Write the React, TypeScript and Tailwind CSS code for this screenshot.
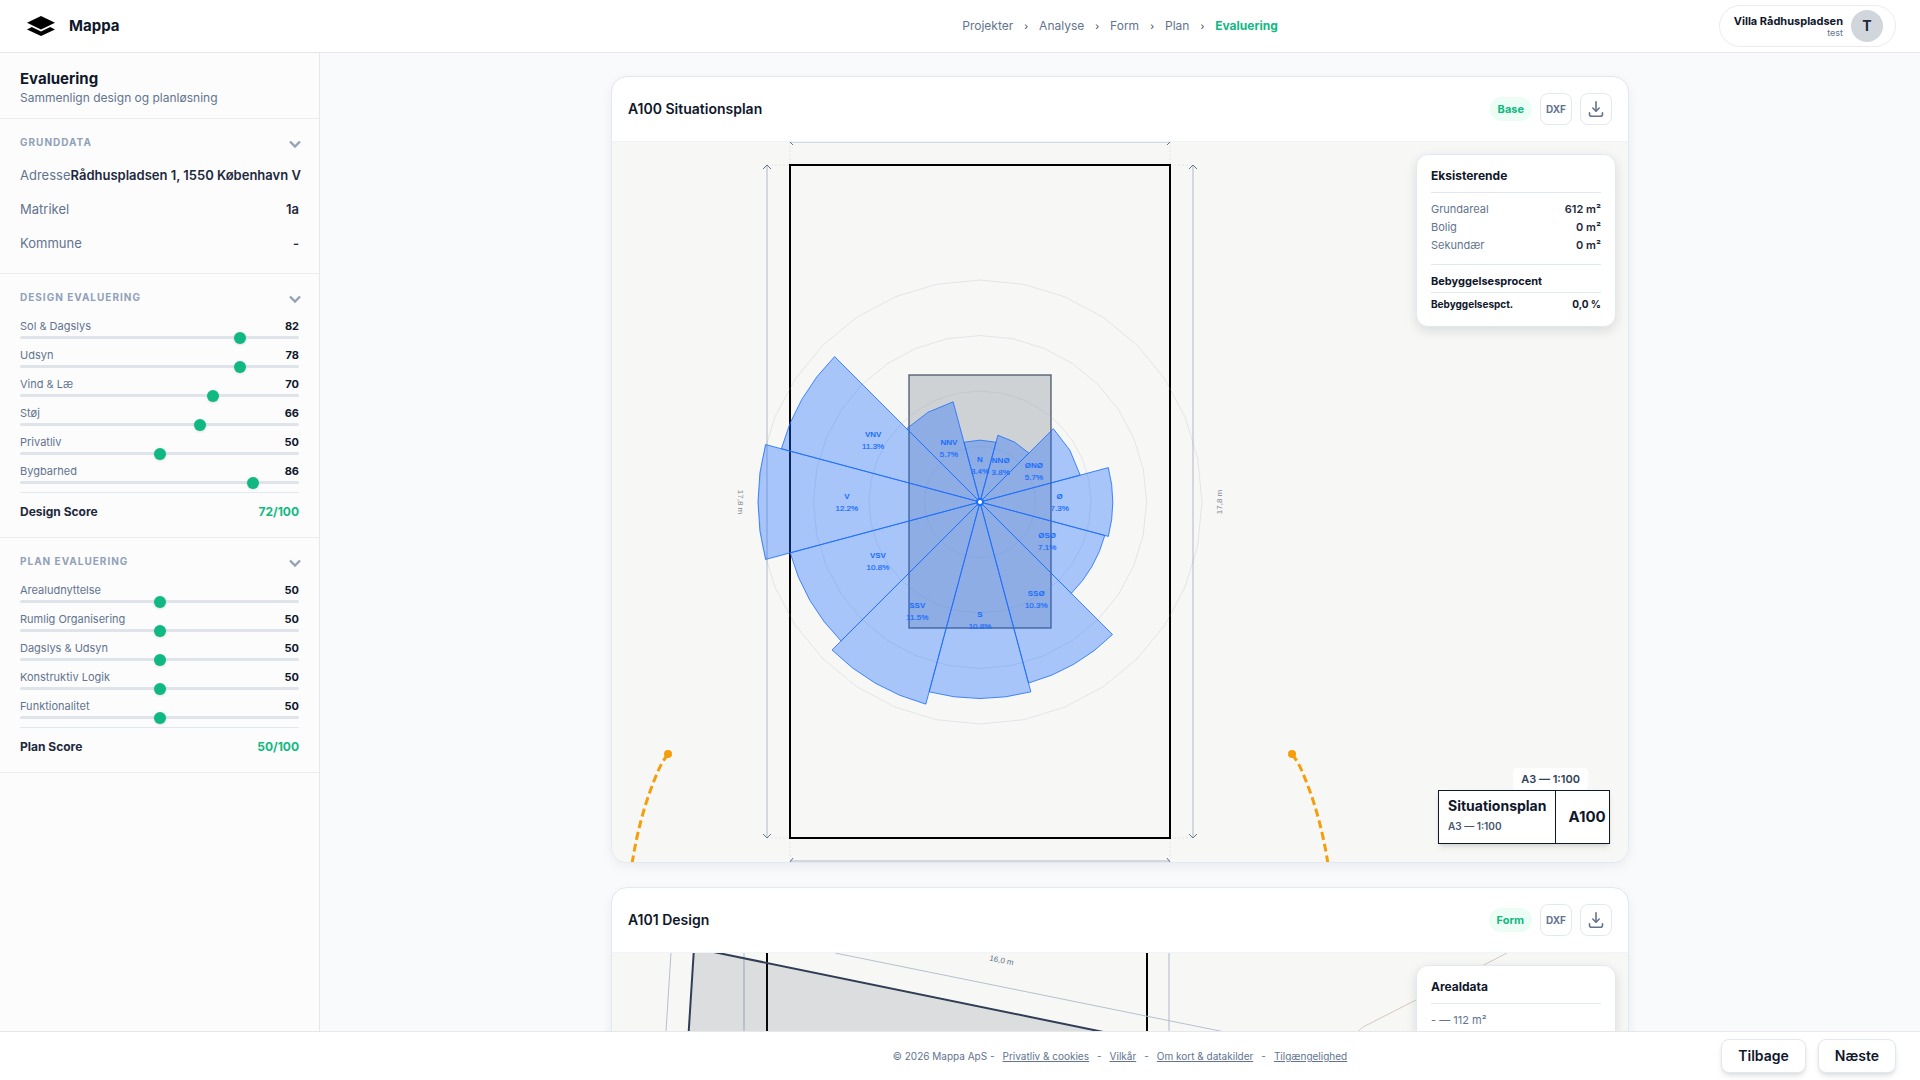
import { useState } from "react";
import type { ReactNode } from "react";

interface Score {
  label: string;
  value: number;
}

interface Sector {
  name: string;
  bearing: number;
  pct: number;
}

const designScores: Score[] = [
  { label: "Sol & Dagslys", value: 82 },
  { label: "Udsyn", value: 78 },
  { label: "Vind & Læ", value: 70 },
  { label: "Støj", value: 66 },
  { label: "Privatliv", value: 50 },
  { label: "Bygbarhed", value: 86 },
];

const planScores: Score[] = [
  { label: "Arealudnyttelse", value: 50 },
  { label: "Rumlig Organisering", value: 50 },
  { label: "Dagslys & Udsyn", value: 50 },
  { label: "Konstruktiv Logik", value: 50 },
  { label: "Funktionalitet", value: 50 },
];

const windSectors: Sector[] = [
  { name: "N", bearing: 0, pct: 3.4 },
  { name: "NNØ", bearing: 30, pct: 3.8 },
  { name: "ØNØ", bearing: 60, pct: 5.7 },
  { name: "Ø", bearing: 90, pct: 7.3 },
  { name: "ØSØ", bearing: 120, pct: 7.1 },
  { name: "SSØ", bearing: 150, pct: 10.3 },
  { name: "S", bearing: 180, pct: 10.8 },
  { name: "SSV", bearing: 210, pct: 11.5 },
  { name: "VSV", bearing: 240, pct: 10.8 },
  { name: "V", bearing: 270, pct: 12.2 },
  { name: "VNV", bearing: 300, pct: 11.3 },
  { name: "NNV", bearing: 330, pct: 5.7 },
];

const ROSE_RADIUS = 222;
const MAX_PCT = 12.2;

// bearing is in degrees, clockwise from north
function polar(r: number, bearing: number) {
  const a = (bearing * Math.PI) / 180;
  return [r * Math.sin(a), -r * Math.cos(a)];
}

function ringPoints(r: number) {
  return Array.from({ length: 32 }, (_, i) => polar(r, i * 11.25).join(",")).join(" ");
}

function wedgePoints(r: number, bearing: number) {
  const steps = r < 110 ? 2 : 4;
  const arc = Array.from({ length: steps + 1 }, (_, i) =>
    polar(r, bearing - 15 + (30 / steps) * i).join(",")
  );
  return ["0,0", ...arc].join(" ");
}

function Logo() {
  return (
    <svg width="28" height="20" viewBox="0 0 28 20" fill="#000" aria-hidden="true">
      <path d="M14 0 28 6.8 14 13.4 0 6.8Z" />
      <path d="M0 13.4 4.8 11 14 15.4 23.2 11 28 13.4 14 20Z" />
    </svg>
  );
}

function DownloadIcon() {
  return (
    <svg width="16" height="18" viewBox="0 0 16 18" fill="none" stroke="#64748b" strokeWidth="1.6" strokeLinecap="round" strokeLinejoin="round" aria-hidden="true">
      <path d="M8 1.8V11" />
      <path d="M4.8 8 8 11.2 11.2 8" />
      <path d="M1.5 12.8V14.2Q1.5 16.2 3.5 16.2H12.5Q14.5 16.2 14.5 14.2V12.8" />
    </svg>
  );
}

function SidebarSection({ title, children }: { title: string; children: ReactNode }) {
  const [open, setOpen] = useState(true);

  return (
    <section className="border-b border-[#ececee] px-5 pt-[15px] pb-4">
      <button
        type="button"
        aria-expanded={open}
        onClick={() => setOpen(!open)}
        className="flex w-full items-center justify-between text-[10px] leading-4 font-bold tracking-widest text-slate-400 uppercase"
      >
        {title}
        <svg width="12" height="8" viewBox="0 0 12 8" fill="none" stroke="#94a3b8" strokeWidth="2.4" className="mt-1 -mr-0.5" aria-hidden="true">
          <path d="M1 1.5 6 6.5 11 1.5" />
        </svg>
      </button>
      {open && children}
    </section>
  );
}

function DataRow({ label, value }: { label: string; value: string }) {
  return (
    <div className="flex justify-between text-[13px] leading-[18px] whitespace-nowrap">
      <dt className="text-slate-500">{label}</dt>
      <dd className="font-semibold text-slate-800">{value}</dd>
    </div>
  );
}

function ScoreSlider({ label, value }: Score) {
  const id = label.toLowerCase().replace(/[^a-zæøå]+/g, "-");

  return (
    <div className="flex h-[29px] flex-col">
      <div className="flex items-center justify-between text-[11px] leading-4">
        <label htmlFor={id} className="text-slate-500">{label}</label>
        <span className="font-bold text-slate-900">{value}</span>
      </div>
      <input
        id={id}
        type="range"
        min={0}
        max={100}
        step={5}
        defaultValue={value}
        className="mt-0.5 h-[3px] w-full cursor-pointer appearance-none rounded-full bg-[#dfe3ea] [&::-webkit-slider-thumb]:size-3 [&::-webkit-slider-thumb]:appearance-none [&::-webkit-slider-thumb]:rounded-full [&::-webkit-slider-thumb]:bg-[#10b981] [&::-webkit-slider-thumb]:shadow-sm"
      />
    </div>
  );
}

function ScoreList({ scores, total, score }: { scores: Score[]; total: string; score: string }) {
  return (
    <>
      <div className="mt-[13px]">
        {scores.map((item) => (
          <ScoreSlider key={item.label} {...item} />
        ))}
      </div>
      <div className="flex justify-between border-t border-slate-200 pt-[10px] text-xs leading-[18px] font-bold">
        <span className="text-slate-800">{total}</span>
        <span className="text-[#10b981]">{score}</span>
      </div>
    </>
  );
}

function Sidebar() {
  return (
    <aside className="w-80 shrink-0 border-r border-[#e5e7eb] bg-[#fcfcfc]">
      <div className="border-b border-[#ececee] px-5 pt-[15px] pb-[11px]">
        <h1 className="text-[15px] leading-[21px] font-bold text-slate-900">Evaluering</h1>
        <p className="text-xs leading-[18px] text-slate-500">Sammenlign design og planløsning</p>
      </div>
      <SidebarSection title="Grunddata">
        <dl className="mt-4 mb-[5px] flex flex-col gap-4">
          <DataRow label="Adresse" value="Rådhuspladsen 1, 1550 København V" />
          <DataRow label="Matrikel" value="1a" />
          <DataRow label="Kommune" value="-" />
        </dl>
      </SidebarSection>
      <SidebarSection title="Design evaluering">
        <ScoreList scores={designScores} total="Design Score" score="72/100" />
      </SidebarSection>
      <SidebarSection title="Plan evaluering">
        <ScoreList scores={planScores} total="Plan Score" score="50/100" />
      </SidebarSection>
    </aside>
  );
}

function PlanCard({ title, badge, children }: { title: string; badge: string; children: ReactNode }) {
  return (
    <article className="overflow-hidden rounded-2xl border border-slate-200 bg-white shadow-[0_4px_12px_rgba(15,23,42,0.06)]">
      <header className="flex items-center justify-between border-b border-slate-100 p-4">
        <h2 className="text-sm leading-5 font-semibold text-slate-900">{title}</h2>
        <div className="flex items-center gap-2">
          <span className="rounded-full bg-emerald-50 px-2 text-[11px] leading-6 font-bold text-[#10b981]">{badge}</span>
          <button type="button" className="flex size-8 items-center justify-center rounded-lg border border-slate-200 bg-white text-[10px] font-bold text-slate-500">
            DXF
          </button>
          <button type="button" aria-label="Download" className="flex size-8 items-center justify-center rounded-lg border border-slate-200 bg-white">
            <DownloadIcon />
          </button>
        </div>
      </header>
      <div className="relative bg-[#f7f7f5]">{children}</div>
    </article>
  );
}

function InfoBox({ title, children }: { title: string; children: ReactNode }) {
  return (
    <div className="absolute top-3 right-3 w-[200px] rounded-xl border border-slate-200 bg-white px-[14px] pt-3 pb-[14px] shadow-[0_4px_12px_rgba(15,23,42,0.12)]">
      <h3 className="border-b border-slate-200 pb-[7px] text-xs leading-[18px] font-bold text-slate-900">{title}</h3>
      {children}
    </div>
  );
}

function InfoRow({ label, value }: { label: string; value: string }) {
  return (
    <div className="flex justify-between">
      <dt className="text-slate-500">{label}</dt>
      <dd className="font-semibold text-slate-800">{value}</dd>
    </div>
  );
}

function WindRose() {
  return (
    <g>
      {[1, 2, 3, 4].map((i) => (
        <polygon key={i} points={ringPoints((ROSE_RADIUS / 4) * i)} fill="none" stroke="#94a3b8" strokeOpacity="0.22" />
      ))}
      {windSectors.map((s) => (
        <polygon
          key={s.name}
          points={wedgePoints((ROSE_RADIUS * s.pct) / MAX_PCT, s.bearing)}
          fill="#1a6dff"
          fillOpacity="0.36"
          stroke="#1a6dff"
          strokeOpacity="0.8"
        />
      ))}
      {windSectors.map((s) => {
        const [x, y] = polar((ROSE_RADIUS * s.pct * 0.6) / MAX_PCT, s.bearing);
        return (
          <text key={s.name} textAnchor="middle" fontSize="8" fill="#1a6dff" className="font-['Liberation_Sans',sans-serif]">
            <tspan x={x} y={y - 3} fontWeight="700">{s.name}</tspan>
            <tspan x={x} y={y + 9} stroke="#1a6dff" strokeWidth="0.2">{s.pct.toFixed(1)}%</tspan>
          </text>
        );
      })}
      <circle r="3" fill="#fff" stroke="#1a6dff" strokeWidth="2" />
    </g>
  );
}

function SitePlan() {
  const sunPath = "M-312 252Q-318 260 -321 267Q-340 310 -348 362";

  return (
    <svg viewBox="-368 -360 1016 720" className="block w-full" role="img" aria-label="Situationsplan">
      <g stroke="#e2e5ea" strokeDasharray="2 2">
        <path d="M-190-360V-337M190-360V-337M-190 336V360M190 336V360" />
        <path d="M-213-337H-190M190-337H213M-213 336H-190M190 336H213" />
      </g>
      <g stroke="#d2d7e0" strokeWidth="2" fill="none">
        <path d="M-213-337V336M213-337V336" />
        <path d="M-190-359.5H190" strokeWidth="1" />
        <path d="M-190 359H190" />
      </g>
      <g stroke="#64748b" fill="none">
        <path d="M-217-333-213-337-209-333M209-333 213-337 217-333" />
        <path d="M-217 332-213 336-209 332M209 332 213 336 217 332" />
        <path d="M-190-360-187-357M190-360 187-357M-190 360-187 356M190 360 187 356" />
      </g>
      <rect x="-190" y="-337" width="380" height="673" fill="none" stroke="#000" strokeWidth="2" />
      <rect x="-71" y="-127" width="142" height="253" fill="#334155" fillOpacity="0.2" stroke="#334155" strokeOpacity="0.7" strokeWidth="1.6" />
      <WindRose />
      <g fontSize="8" fill="#7c8798" textAnchor="middle" className="font-['Liberation_Sans',sans-serif]">
        <text transform="translate(242 0) rotate(-90)">17,8 m</text>
        <text transform="translate(-242 0) rotate(90)">17,8 m</text>
      </g>
      <g fill="none" stroke="#f59e0b" strokeWidth="3" strokeDasharray="8 4">
        <path d={sunPath} />
        <path d={sunPath} transform="scale(-1 1)" />
      </g>
      <circle cx="-312" cy="252" r="4" fill="#f59e0b" />
      <circle cx="312" cy="252" r="4" fill="#f59e0b" />
    </svg>
  );
}

function DesignPlan() {
  return (
    <svg viewBox="-368 0 1016 720" className="block w-full" role="img" aria-label="Design">
      <path d="M-236 0V720M189 0V720" stroke="#d2d7e0" strokeWidth="2" />
      <path d="M-213 0V720M167 0V720" stroke="#000" strokeWidth="2" />
      <path d="M527 0 436 47 383 74 340 112" stroke="#d4c8c0" fill="none" />
      <path d="M-286-5 640 185V720H-332Z" fill="#334155" fillOpacity="0.14" stroke="#2f3e55" strokeWidth="2" />
      <path d="M-309 0-355 720M-145 0 245 79 640 158" stroke="#b7bfcf" fill="none" />
      <text transform="translate(21 10) rotate(11.6)" textAnchor="middle" fontSize="8" fill="#64748b" className="font-['Liberation_Sans',sans-serif]">
        16,0 m
      </text>
    </svg>
  );
}

function TitleBlock() {
  return (
    <div className="absolute right-[18px] bottom-[18px] flex flex-col items-end">
      <span className="mr-[22px] rounded bg-white/90 px-2 text-[11px] leading-[22px] font-semibold text-slate-700">A3 — 1:100</span>
      <div className="flex h-[54px] w-[172px] border border-slate-900 bg-white shadow-md">
        <div className="border-r border-slate-900 px-[9px] pt-[5px] whitespace-nowrap">
          <div className="text-sm leading-5 font-bold text-slate-900">Situationsplan</div>
          <div className="text-[10px] leading-5 font-semibold text-slate-600">A3 — 1:100</div>
        </div>
        <div className="flex flex-1 items-center pl-3 text-[15px] font-bold text-slate-900">A100</div>
      </div>
    </div>
  );
}

const crumbs = ["Projekter", "Analyse", "Form", "Plan"];
const footerLinks = ["Privatliv & cookies", "Vilkår", "Om kort & datakilder", "Tilgængelighed"];

export default function App() {
  return (
    <div className="flex h-screen flex-col overflow-hidden bg-slate-50 font-[Inter,sans-serif] text-slate-900">
      <header className="flex h-[53px] shrink-0 items-center border-b border-[#e5e7eb] bg-white">
        <a href="#" className="flex w-80 shrink-0 items-center gap-[14px] pl-[27px] text-[15px] leading-6 font-bold">
          <Logo />
          Mappa
        </a>
        <div className="grid flex-1 grid-cols-[1fr_auto_1fr] items-center px-6">
          <nav className="col-start-2 flex items-center gap-[11px] text-xs leading-4">
            {crumbs.map((crumb) => (
              <div key={crumb} className="flex items-center gap-[11px]">
                <a href="#" className="text-slate-500">{crumb}</a>
                <span className="text-[10px] text-slate-700">›</span>
              </div>
            ))}
            <a href="#" aria-current="page" className="font-bold text-[#10b981]">Evaluering</a>
          </nav>
          <button type="button" className="flex items-center gap-2 justify-self-end rounded-full border border-[#ececee] bg-white py-1 pr-3 pl-[14px] text-right">
            <span>
              <span className="block text-[11px] leading-[14px] font-bold">Villa Rådhuspladsen</span>
              <span className="block text-[9px] leading-[10px] text-slate-500">test</span>
            </span>
            <span className="flex size-8 items-center justify-center rounded-full bg-gray-300 text-sm font-bold text-slate-800">T</span>
          </button>
        </div>
      </header>

      <div className="flex min-h-0 flex-1">
        <Sidebar />
        <main className="min-w-0 flex-1 overflow-y-auto px-6 pt-[23px] pb-6 [scrollbar-width:none]">
          <div className="mx-auto flex max-w-[1018px] flex-col gap-6">
            <PlanCard title="A100 Situationsplan" badge="Base">
              <SitePlan />
              <InfoBox title="Eksisterende">
                <dl className="flex flex-col pt-[7px] pb-[10px] text-[11px] leading-[18px]">
                  <InfoRow label="Grundareal" value="612 m²" />
                  <InfoRow label="Bolig" value="0 m²" />
                  <InfoRow label="Sekundær" value="0 m²" />
                </dl>
                <h4 className="border-y border-slate-200 pt-2 pb-[3px] text-[11px] leading-4 font-bold">Bebyggelsesprocent</h4>
                <div className="flex justify-between pt-[3px] text-[10px] leading-4 font-bold">
                  <span>Bebyggelsespct.</span>
                  <span>0,0 %</span>
                </div>
              </InfoBox>
              <TitleBlock />
            </PlanCard>
            <PlanCard title="A101 Design" badge="Form">
              <DesignPlan />
              <InfoBox title="Arealdata">
                <p className="py-[7px] text-[11px] leading-[18px] text-slate-500">- — 112 m²</p>
              </InfoBox>
            </PlanCard>
          </div>
        </main>
      </div>

      <footer className="flex h-[49px] shrink-0 items-center border-t border-[#e5e7eb] bg-white pl-80">
        <div className="grid flex-1 grid-cols-[1fr_auto_1fr] items-center px-6">
          <div className="col-start-2 flex gap-2 text-[10px] leading-4 text-slate-500">
            <span>© 2026 Mappa ApS -</span>
            {footerLinks.map((link, i) => (
              <div key={link} className="flex gap-2">
                {i > 0 && <span>-</span>}
                <a href="#" className="underline">{link}</a>
              </div>
            ))}
          </div>
          <div className="flex gap-3 justify-self-end">
            <button type="button" className="h-[34px] rounded-lg border border-slate-200 bg-white px-4 text-sm font-semibold shadow-md">Tilbage</button>
            <button type="button" className="h-[34px] rounded-lg border border-slate-200 bg-white px-4 text-sm font-semibold shadow-md">Næste</button>
          </div>
        </div>
      </footer>
    </div>
  );
}
